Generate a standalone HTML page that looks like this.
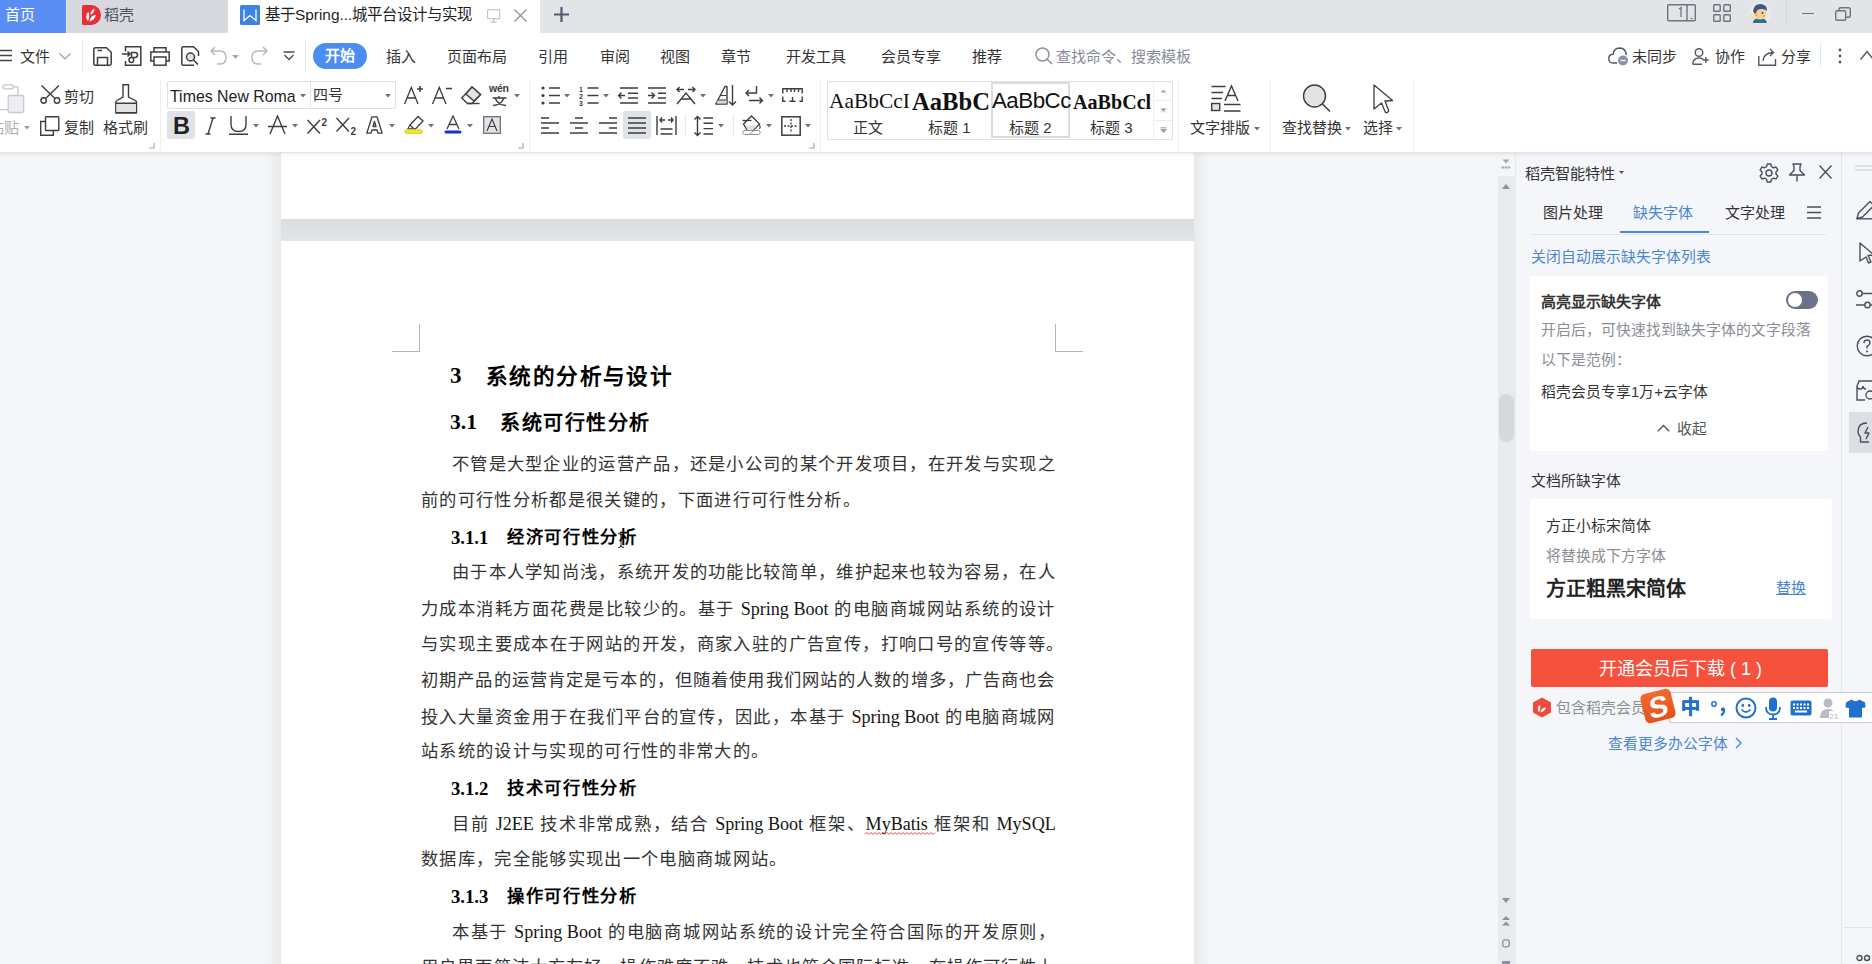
<!DOCTYPE html>
<html lang="zh-CN"><head><meta charset="utf-8">
<style>
*{margin:0;padding:0;box-sizing:border-box}
html,body{width:1872px;height:964px;overflow:hidden;background:#f5f6f8;font-family:"Liberation Sans",sans-serif;color:#333}
.a{position:absolute;white-space:nowrap}
svg{position:absolute;overflow:visible}
#tabs{position:absolute;left:0;top:0;width:1872px;height:33px;background:#e3e4e8}
#menu{position:absolute;left:0;top:33px;width:1872px;height:45px;background:#fff}
#ribbon{position:absolute;left:0;top:78px;width:1872px;height:75px;background:#fff}
#doc{position:absolute;left:0;top:153px;width:1497px;height:811px;background:#f5f6f8;overflow:hidden}
.pg{position:absolute;left:281px;width:913px;background:#fff}
.menu{font-size:15px;color:#333;top:47px;line-height:20px}
.L{position:absolute;font-family:"Liberation Serif",serif;color:#333;font-size:17.3px;line-height:24px;height:24px;white-space:nowrap}
.E{font-size:18.1px;letter-spacing:0;color:#151515}
.H{position:absolute;font-family:"Liberation Serif",serif;color:#000;font-weight:bold;white-space:nowrap}
</style></head><body>
<!-- TABS -->
<div id="tabs">
  <div class="a" style="left:0;top:0;width:66px;height:33px;background:#5b8ef4"></div>
  <div class="a" style="left:5px;top:5px;font-size:15px;line-height:20px;color:#fff">首页</div>
  <div class="a" style="left:67px;top:0;width:161px;height:33px;background:#d8d9de;border-radius:0 0 4px 0"></div>
  <svg style="left:82px;top:5px" width="20" height="20" viewBox="0 0 20 20"><path d="M0 1.5Q0 0 1.5 0H9.5A9.5 10 0 0 1 9.5 20H1.5Q0 20 0 18.5Z" fill="#e72f38"/><path d="M6 16C3 13 4 9 6.5 7C7.5 10 7.5 13 6 16Z" fill="#fff"/><path d="M7.5 16.5C8 12.5 10.5 10 14 10C13 13.5 11 15.5 7.5 16.5Z" fill="#fff"/><path d="M8.5 10C8.5 7 10 4.5 12.5 3.5C12.5 6.5 11 8.5 8.5 10Z" fill="#fff"/></svg>
  <div class="a" style="left:104px;top:5px;font-size:15px;line-height:20px;color:#4a505e">稻壳</div>
  <div class="a" style="left:228px;top:0;width:312px;height:33px;background:#fff"></div>
  <svg style="left:240px;top:5px" width="20" height="20" viewBox="0 0 20 20"><rect x="0" y="0" width="20" height="20" rx="1.5" fill="#3b84e2"/><path d="M4 4.5V15.5L10 10.5L16 15.5V4.5" fill="none" stroke="#fff" stroke-width="1.3"/></svg>
  <div class="a" style="left:265px;top:5px;font-size:15.4px;line-height:20px;color:#1e1e1e">基于Spring...城平台设计与实现</div>
  <svg style="left:487px;top:9px" width="14" height="14" viewBox="0 0 14 14"><rect x="0.6" y="0.6" width="12" height="9" rx="0.5" fill="none" stroke="#c4c7cf" stroke-width="1.2"/><path d="M6.6 10V13M3.5 13.2H9.7" stroke="#c4c7cf" stroke-width="1.2"/></svg>
  <svg style="left:514px;top:9px" width="13" height="13" viewBox="0 0 13 13"><path d="M0.5 0.5L12.5 12.5M12.5 0.5L0.5 12.5" stroke="#8d919d" stroke-width="1.3"/></svg>
  <svg style="left:554px;top:7px" width="15" height="15" viewBox="0 0 15 15"><path d="M7.5 0V15M0 7.5H15" stroke="#535a6c" stroke-width="2.2"/></svg>
  <!-- right side -->
  <svg style="left:1667px;top:4px" width="30" height="18" viewBox="0 0 30 18"><rect x="0.7" y="0.7" width="27.6" height="16" rx="1" fill="none" stroke="#6e7380" stroke-width="1.4"/><path d="M20 1V17" stroke="#6e7380" stroke-width="1.4"/><path d="M12 5L14 3.5V13" fill="none" stroke="#6e7380" stroke-width="1.3"/><path d="M23.5 14.5H25.5" stroke="#6e7380" stroke-width="1.2"/></svg>
  <svg style="left:1713px;top:4px" width="18" height="18" viewBox="0 0 18 18"><g fill="none" stroke="#6e7380" stroke-width="1.4"><rect x="0.7" y="0.7" width="6.5" height="6.5" rx="0.8"/><rect x="10.8" y="0.7" width="6.5" height="6.5" rx="0.8"/><rect x="0.7" y="10.8" width="6.5" height="6.5" rx="0.8"/><rect x="10.8" y="10.8" width="6.5" height="6.5" rx="0.8"/></g></svg>
  <svg style="left:1746px;top:0px" width="28" height="25" viewBox="0 0 28 25"><circle cx="14" cy="13" r="11.5" fill="#e8e9ee"/><path d="M7 22Q8 18 14 18Q20 18 21 23H7Z" fill="#2f6f8a"/><path d="M8 12Q8 7.5 13.5 7.5Q20 7.5 20.5 12.5Q20.5 19 14.5 19.5Q8.5 19.5 8 14Z" fill="#f3cf9b"/><path d="M7.5 12Q7 4 14.5 4Q21.5 4.5 21 11Q19 8.5 14 9Q11 9.5 10 12Z" fill="#3b5b86"/><path d="M7.5 11Q7.5 9 9.5 8.5L10.5 12.5L8.5 14Z" fill="#6b4a2e"/><circle cx="16.5" cy="12.8" r="0.9" fill="#333"/><circle cx="10.5" cy="15" r="1" fill="#e8866a" opacity="0.7"/><circle cx="18" cy="16" r="1" fill="#e8866a" opacity="0.7"/><path d="M4 16Q3.5 13.5 5.5 14L8 17.5L7.5 21Q5 20 4 16Z" fill="#f2dfa8"/></svg>
  <div class="a" style="left:1786px;top:0;width:1px;height:25px;background:#d5d6da"></div>
  <div class="a" style="left:1802px;top:13px;width:12px;height:1.4px;background:#6e7380"></div>
  <svg style="left:1835px;top:7px" width="16" height="14" viewBox="0 0 16 14"><g fill="none" stroke="#6e7380" stroke-width="1.4"><rect x="0.7" y="3.7" width="10" height="9.6" rx="1.5"/><path d="M4 3.5V2.2Q4 0.7 5.5 0.7H13.5Q15.3 0.7 15.3 2.5V8.5Q15.3 10.3 13.5 10.3H11"/></g></svg>
</div>
<!-- MENU ROW -->
<div id="menu">
  <svg style="left:0px;top:16px" width="13" height="13" viewBox="0 0 13 13"><path d="M0 1.5H12M0 6.5H12M0 11.5H12" stroke="#444" stroke-width="1.3"/></svg>
  <div class="a" style="left:20px;top:14px;font-size:15px;line-height:20px;color:#333">文件</div>
  <svg style="left:59px;top:20px" width="12" height="7" viewBox="0 0 12 7"><path d="M0.5 0.5L6 6L11.5 0.5" fill="none" stroke="#9a9ea8" stroke-width="1.2"/></svg>
  <div class="a" style="left:82px;top:8px;width:1px;height:30px;background:#e8e9ec"></div>
  <!-- save -->
  <svg style="left:93px;top:14px" width="19" height="19" viewBox="0 0 19 19"><g fill="none" stroke="#3d3d3d" stroke-width="1.5" stroke-linejoin="round"><path d="M2.5 0.8H13.5L18.2 5.2V16.5Q18.2 18.2 16.5 18.2H2.5Q0.8 18.2 0.8 16.5V2.5Q0.8 0.8 2.5 0.8Z"/><path d="M4.5 3.5H9"/><path d="M4.5 18.2V10.5H14.5V18.2"/></g></svg>
  <!-- export -->
  <svg style="left:122px;top:13px" width="20" height="20" viewBox="0 0 20 20"><g fill="none" stroke="#3d3d3d" stroke-width="1.5"><path d="M3.5 5.5V0.8H18.8V19.2H3.5V15"/><path d="M0 8H8M5.5 5.5L8 8L5.5 10.5"/><path d="M9.5 12V6.5H13Q15.5 6.5 15.5 9Q15.5 11.5 13 11.5H9.5Q7 11.5 7 14Q7 16.5 9.5 16.5Q11.5 16.5 11.5 14.5V11.5"/></g></svg>
  <!-- print -->
  <svg style="left:150px;top:14px" width="20" height="19" viewBox="0 0 20 19"><g fill="none" stroke="#3d3d3d" stroke-width="1.5"><path d="M4 5V0.8H16V5"/><path d="M4 14H0.8V5H19.2V14H16"/><rect x="4" y="10" width="12" height="8.2"/></g></svg>
  <!-- preview -->
  <svg style="left:181px;top:13px" width="20" height="20" viewBox="0 0 20 20"><g fill="none" stroke="#3d3d3d" stroke-width="1.5" stroke-linejoin="round"><path d="M13 19.2H2.5Q0.8 19.2 0.8 17.5V2.5Q0.8 0.8 2.5 0.8H12.5L17.5 5.5V10"/></g><circle cx="9.5" cy="11" r="4" fill="#e1e3e7" stroke="#3d3d3d" stroke-width="1.5"/><path d="M12.5 14L17 18.5" stroke="#3d3d3d" stroke-width="1.6"/></svg>
  <!-- undo -->
  <svg style="left:210px;top:13px" width="18" height="19" viewBox="0 0 18 19"><path d="M5 1L1 5L5 9M1 5H10Q16 5 16 11.5Q16 18 10 18H7" fill="none" stroke="#b5b8c0" stroke-width="1.5"/></svg>
  <svg style="left:232px;top:22px" width="7" height="4" viewBox="0 0 7 4"><path d="M0 0H7L3.5 4Z" fill="#a5a8b0"/></svg>
  <!-- redo -->
  <svg style="left:250px;top:13px" width="18" height="19" viewBox="0 0 18 19"><path d="M13 1L17 5L13 9M17 5H8Q2 5 2 11.5Q2 18 8 18H11" fill="none" stroke="#b5b8c0" stroke-width="1.5"/></svg>
  <!-- customize -->
  <svg style="left:283px;top:18px" width="12" height="10" viewBox="0 0 12 10"><path d="M0.5 1H11.5M1.5 4L6 8.5L10.5 4" fill="none" stroke="#4a4a4a" stroke-width="1.3"/></svg>
  <div class="a" style="left:305px;top:8px;width:1px;height:30px;background:#e8e9ec"></div>
  <div class="a" style="left:313px;top:10px;width:54px;height:26px;background:#4b8df0;border-radius:13px"></div>
  <div class="a" style="left:325px;top:13px;font-size:15px;line-height:20px;color:#fff;font-weight:bold">开始</div>
</div>
<div class="a menu" style="left:386px">插入</div>
<div class="a menu" style="left:447px">页面布局</div>
<div class="a menu" style="left:538px">引用</div>
<div class="a menu" style="left:600px">审阅</div>
<div class="a menu" style="left:660px">视图</div>
<div class="a menu" style="left:721px">章节</div>
<div class="a menu" style="left:786px">开发工具</div>
<div class="a menu" style="left:881px">会员专享</div>
<div class="a menu" style="left:972px">推荐</div>
<svg style="left:1035px;top:47px" width="18" height="18" viewBox="0 0 18 18"><circle cx="7.5" cy="7.5" r="6.5" fill="none" stroke="#8e939e" stroke-width="1.5"/><path d="M12.2 12.2L17 17" stroke="#8e939e" stroke-width="1.6"/></svg>
<div class="a menu" style="left:1056px;color:#878c97">查找命令、搜索模板</div>
<!-- right of menu -->
<svg style="left:1608px;top:47px" width="21" height="19" viewBox="0 0 21 19"><path d="M9 16H5Q0.8 16 0.8 11.5Q0.8 7.5 5 7.3Q6 1 11.5 1Q18 1.3 18.3 8" fill="none" stroke="#50576a" stroke-width="1.4"/><circle cx="15" cy="13.5" r="5" fill="#8a92a6"/><path d="M12.5 13.5H17.5" stroke="#fff" stroke-width="1.4"/></svg>
<div class="a menu" style="left:1632px;color:#333">未同步</div>
<svg style="left:1692px;top:48px" width="18" height="17" viewBox="0 0 18 17"><g fill="none" stroke="#50576a" stroke-width="1.4"><circle cx="7" cy="4.5" r="3.8"/><path d="M0.8 16.2Q0.8 10 7 10Q10 10 11.5 11.5M0.8 16.2H10"/><path d="M13.8 9V15M10.8 12H16.8"/></g></svg>
<div class="a menu" style="left:1715px;color:#333">协作</div>
<svg style="left:1758px;top:48px" width="19" height="18" viewBox="0 0 19 18"><g fill="none" stroke="#50576a" stroke-width="1.4"><path d="M0.8 8V17.2H17.5V11"/><path d="M5 13Q5.5 5 15 4.5M12 1L15.5 4.5L12 8"/></g></svg>
<div class="a menu" style="left:1781px;color:#333">分享</div>
<div class="a" style="left:1820px;top:43px;width:1px;height:24px;background:#e3e4e8"></div>
<svg style="left:1838px;top:48px" width="4" height="16" viewBox="0 0 4 16"><circle cx="2" cy="2" r="1.4" fill="#555"/><circle cx="2" cy="8" r="1.4" fill="#555"/><circle cx="2" cy="14" r="1.4" fill="#555"/></svg>
<svg style="left:1860px;top:50px" width="14" height="10" viewBox="0 0 14 10"><path d="M0.5 9.5L7 1.5L13.5 9.5" fill="none" stroke="#555" stroke-width="1.3"/></svg>

<div id="ribbon"></div>
<!-- RIBBON -->
<!-- RIBBON ICONS -->
<div class="a" style="left:0;top:152px;width:1872px;height:1px;background:#e4e5e8"></div>
<!-- section 1 clipboard -->
<svg style="left:0px;top:84px" width="25" height="30" viewBox="0 0 25 30"><g fill="none" stroke="#c3c6cc" stroke-width="1.3"><rect x="3" y="0.8" width="10.5" height="4" rx="2"/><path d="M13.5 2.8H18V11.5"/><path d="M0 25.6H8"/></g><rect x="8.2" y="11.5" width="15.5" height="17" rx="1.5" fill="#eceef1" stroke="#c6c9cf" stroke-width="1.3"/></svg>
<div class="a" style="left:-11px;top:118px;font-size:15px;line-height:20px;color:#a9acb4">粘贴</div>
<svg style="left:24px;top:126px" width="6" height="4" viewBox="0 0 6 4"><path d="M0 0H6L3 3.5Z" fill="#9a9da5"/></svg>
<svg style="left:40px;top:85px" width="21" height="19" viewBox="0 0 21 19"><g fill="none" stroke="#3d3d3d" stroke-width="1.4"><path d="M1.5 0.5L14.5 13M19 0.5L6 13"/><circle cx="3.6" cy="15.5" r="2.7"/><circle cx="17" cy="15.5" r="2.7"/></g></svg>
<div class="a" style="left:64px;top:87px;font-size:15px;line-height:20px;color:#333">剪切</div>
<svg style="left:40px;top:116px" width="20" height="20" viewBox="0 0 20 20"><g fill="none" stroke="#3d3d3d" stroke-width="1.4"><rect x="5.5" y="0.7" width="13.3" height="13.8" rx="0.8"/><path d="M5.5 5.5H0.7V19.3H13.3V14.5"/></g></svg>
<div class="a" style="left:64px;top:118px;font-size:15px;line-height:20px;color:#333">复制</div>
<svg style="left:115px;top:84px" width="23" height="30" viewBox="0 0 23 30"><path d="M8 0.8H13.5V13L20.3 16.5Q21.5 17.2 21.5 18.5V28.7H0.8V18.5Q0.8 17.2 2 16.5L8 13Z" fill="#fff" stroke="#3d3d3d" stroke-width="1.4"/><rect x="1.5" y="19.5" width="19.5" height="8.5" fill="#e1e3e7"/><path d="M0.8 19.3H21.5M0.8 28.7H21.5" stroke="#3d3d3d" stroke-width="1.4"/></svg>
<div class="a" style="left:103px;top:118px;font-size:15px;line-height:20px;color:#333">格式刷</div>
<svg style="left:149px;top:143px" width="6" height="6" viewBox="0 0 6 6"><path d="M5 0V5H0" fill="none" stroke="#a0a3aa" stroke-width="1.2"/></svg>
<div class="a" style="left:160px;top:80px;width:1px;height:71px;background:#eeeff1"></div>
<!-- section 2 font -->
<div class="a" style="left:167px;top:81px;width:229px;height:28px;border:1px solid #dfe0e4;border-radius:2px"></div>
<div class="a" style="left:310px;top:82px;width:1px;height:26px;background:#e4e5e8"></div>
<div class="a" style="left:170px;top:87px;font-size:15.9px;line-height:20px;color:#222">Times New Roma</div>
<svg style="left:300px;top:94px" width="6" height="4" viewBox="0 0 6 4"><path d="M0 0H6L3 3.5Z" fill="#6d7280"/></svg>
<div class="a" style="left:313px;top:85px;font-size:15px;line-height:20px;color:#333">四号</div>
<svg style="left:385px;top:94px" width="6" height="4" viewBox="0 0 6 4"><path d="M0 0H6L3 3.5Z" fill="#6d7280"/></svg>
<svg style="left:404px;top:86px" width="20" height="19" viewBox="0 0 20 19"><g fill="none" stroke="#3d3d3d" stroke-width="1.3"><path d="M0.5 18L7.3 1.5L14 18M3 12H11.5"/><path d="M16 0V6M13 3H19" stroke-width="1.5"/></g></svg>
<svg style="left:432px;top:86px" width="21" height="19" viewBox="0 0 21 19"><g fill="none" stroke="#3d3d3d" stroke-width="1.3"><path d="M0.5 18L7.3 1.5L14 18M3 12H11.5"/><path d="M14 2.5H20" stroke-width="1.5"/></g></svg>
<svg style="left:461px;top:86px" width="21" height="19" viewBox="0 0 21 19"><path d="M11 1L19.5 8.5L11 17.5H6.5L0.8 12Z" fill="#fff" stroke="#3d3d3d" stroke-width="1.4"/><path d="M11 1L19.5 8.5L13 15L4.8 8Z" fill="#e1e3e7" stroke="#3d3d3d" stroke-width="1.4"/><path d="M6.5 17.5H18.5" stroke="#3d3d3d" stroke-width="1.4"/></svg>
<div class="a" style="left:489px;top:82px;font-size:10.5px;line-height:12px;font-weight:bold;color:#3d3d3d;letter-spacing:-0.2px">wén</div>
<svg style="left:492px;top:96px" width="15" height="10" viewBox="0 0 15 10"><g fill="none" stroke="#3d3d3d" stroke-width="1.4"><path d="M7 0V1.5M0.5 2H14.5M3 2Q6 9 14 9.5M12 2Q9 9 1 9.5"/></g></svg>
<svg style="left:514px;top:94px" width="6" height="4" viewBox="0 0 6 4"><path d="M0 0H6L3 3.5Z" fill="#6d7280"/></svg>
<!-- row 2 -->
<div class="a" style="left:167px;top:111px;width:28px;height:28px;background:#dfe2e7;border-radius:2px"></div>
<div class="a" style="left:173px;top:113px;font-size:23.5px;line-height:26px;font-weight:bold;color:#222">B</div>
<svg style="left:204px;top:117px" width="12" height="18" viewBox="0 0 12 18"><path d="M4 17L9 1M6.5 1H11.5M1.5 17H6.5" fill="none" stroke="#3d3d3d" stroke-width="1.4"/></svg>
<svg style="left:229px;top:116px" width="19" height="19" viewBox="0 0 19 19"><path d="M2 0V8.5Q2 15.5 9.5 15.5Q17 15.5 17 8.5V0M0 18.3H19" fill="none" stroke="#3d3d3d" stroke-width="1.4"/></svg>
<svg style="left:253px;top:124px" width="6" height="4" viewBox="0 0 6 4"><path d="M0 0H6L3 3.5Z" fill="#6d7280"/></svg>
<svg style="left:268px;top:115px" width="19" height="20" viewBox="0 0 19 20"><path d="M2 19L9.5 1L17 19M0 11.5H19" fill="none" stroke="#3d3d3d" stroke-width="1.4"/></svg>
<svg style="left:292px;top:124px" width="6" height="4" viewBox="0 0 6 4"><path d="M0 0H6L3 3.5Z" fill="#6d7280"/></svg>
<svg style="left:307px;top:117px" width="21" height="18" viewBox="0 0 21 18"><path d="M0.5 3L13 16.5M13 3L0.5 16.5" stroke="#3d3d3d" stroke-width="1.4"/><text x="14.5" y="9" font-size="10" font-weight="bold" font-family="Liberation Sans" fill="#3d3d3d">2</text></svg>
<svg style="left:336px;top:117px" width="21" height="18" viewBox="0 0 21 18"><path d="M0.5 1L13 14.5M13 1L0.5 14.5" stroke="#3d3d3d" stroke-width="1.4"/><text x="14.5" y="17.5" font-size="10" font-weight="bold" font-family="Liberation Sans" fill="#3d3d3d">2</text></svg>
<svg style="left:366px;top:116px" width="17" height="18" viewBox="0 0 17 18"><path d="M0.8 17.2L6 0.8H11L16.2 17.2H12L11 14H6L5 17.2Z M7 10.5H10L8.5 5.5Z" fill="#fff" stroke="#3d3d3d" stroke-width="1.3" stroke-linejoin="round"/></svg>
<svg style="left:389px;top:124px" width="6" height="4" viewBox="0 0 6 4"><path d="M0 0H6L3 3.5Z" fill="#6d7280"/></svg>
<svg style="left:404px;top:115px" width="21" height="19" viewBox="0 0 21 19"><path d="M9 13L6 10L14 1.5L19 6L11 14.5Z" fill="#fff" stroke="#3d3d3d" stroke-width="1.3"/><path d="M6 10L4 13.5L6 14L9 13" fill="none" stroke="#3d3d3d" stroke-width="1.2"/><rect x="0.8" y="14.8" width="17.5" height="3.6" rx="1.8" fill="#f5e61e" stroke="#c9bd3a" stroke-width="0.8"/></svg>
<svg style="left:428px;top:124px" width="6" height="4" viewBox="0 0 6 4"><path d="M0 0H6L3 3.5Z" fill="#6d7280"/></svg>
<svg style="left:444px;top:115px" width="18" height="19" viewBox="0 0 18 19"><path d="M3 14L9 1L15 14M5 9.5H13" fill="none" stroke="#3d3d3d" stroke-width="1.3"/><rect x="0.5" y="15.5" width="17" height="3" rx="1.5" fill="#1530d8"/></svg>
<svg style="left:467px;top:124px" width="6" height="4" viewBox="0 0 6 4"><path d="M0 0H6L3 3.5Z" fill="#6d7280"/></svg>
<svg style="left:483px;top:116px" width="18" height="18" viewBox="0 0 18 18"><rect x="0.7" y="0.7" width="16.6" height="16.6" fill="#e1e3e7" stroke="#6b6f7a" stroke-width="1.3"/><path d="M4 15L9 3L14 15M5.8 10.5H12.2" fill="none" stroke="#3d3d3d" stroke-width="1.2"/></svg>
<svg style="left:518px;top:143px" width="6" height="6" viewBox="0 0 6 6"><path d="M5 0V5H0" fill="none" stroke="#a0a3aa" stroke-width="1.2"/></svg>
<div class="a" style="left:529px;top:80px;width:1px;height:71px;background:#eeeff1"></div>
<!-- section 3 paragraph -->
<svg style="left:541px;top:86px" width="20" height="19" viewBox="0 0 20 19"><g fill="#3d3d3d"><circle cx="2" cy="2" r="1.6"/><circle cx="2" cy="9.5" r="1.6"/><circle cx="2" cy="17" r="1.6"/></g><path d="M8 2H19M8 9.5H19M8 17H19" stroke="#3d3d3d" stroke-width="1.4"/></svg>
<svg style="left:564px;top:94px" width="6" height="4" viewBox="0 0 6 4"><path d="M0 0H6L3 3.5Z" fill="#6d7280"/></svg>
<svg style="left:579px;top:85px" width="21" height="20" viewBox="0 0 21 20"><g font-family="Liberation Sans" font-size="7" font-weight="bold" fill="#3d3d3d"><text x="0" y="6.5">1</text><text x="0" y="14">2</text><text x="0" y="21">3</text></g><path d="M8.5 3H19.5M8.5 10.5H19.5M8.5 18H19.5" stroke="#3d3d3d" stroke-width="1.4"/></svg>
<svg style="left:603px;top:94px" width="6" height="4" viewBox="0 0 6 4"><path d="M0 0H6L3 3.5Z" fill="#6d7280"/></svg>
<svg style="left:618px;top:86px" width="21" height="19" viewBox="0 0 21 19"><g fill="none" stroke="#3d3d3d" stroke-width="1.4"><path d="M2 2H20M10 7.3H20M10 12H20M2 17H20"/><path d="M0.5 9.5H7M3.5 6.5L0.5 9.5L3.5 12.5"/></g></svg>
<svg style="left:647px;top:86px" width="21" height="19" viewBox="0 0 21 19"><g fill="none" stroke="#3d3d3d" stroke-width="1.4"><path d="M1 2H19M11 7.3H19M11 12H19M1 17H19"/><path d="M1 9.5H7.5M4.5 6.5L7.5 9.5L4.5 12.5"/></g></svg>
<svg style="left:676px;top:86px" width="21" height="19" viewBox="0 0 21 19"><g fill="none" stroke="#3d3d3d" stroke-width="1.4"><path d="M1 18L10 7L19 18M5 13H15"/><path d="M1 3.5H8M3.5 1L1 3.5L3.5 6M12 3.5H19M16.5 1L19 3.5L16.5 6"/></g></svg>
<svg style="left:700px;top:94px" width="6" height="4" viewBox="0 0 6 4"><path d="M0 0H6L3 3.5Z" fill="#6d7280"/></svg>
<svg style="left:715px;top:85px" width="21" height="21" viewBox="0 0 21 21"><path d="M0.8 19L10 1.5H12V19Z" fill="#fff" stroke="#3d3d3d" stroke-width="1.4" stroke-linejoin="round"/><path d="M3 15H11.5V18.5H1.5Z" fill="#d5d8dd"/><path d="M5.5 10.5H11.5M2.8 15H11.5" stroke="#3d3d3d" stroke-width="1.2"/><path d="M17.5 0V20M14 16.5L17.5 20L21 16.5" fill="none" stroke="#3d3d3d" stroke-width="1.4"/></svg>
<svg style="left:745px;top:86px" width="19" height="19" viewBox="0 0 19 19"><g fill="none" stroke="#3d3d3d" stroke-width="1.4"><path d="M11.5 0V7H1M4 4L1 7L4 10"/><path d="M4 14.5H17.5M14.5 11.5L17.5 14.5L14.5 17.5"/></g></svg>
<svg style="left:768px;top:94px" width="6" height="4" viewBox="0 0 6 4"><path d="M0 0H6L3 3.5Z" fill="#6d7280"/></svg>
<svg style="left:782px;top:88px" width="21" height="14" viewBox="0 0 21 14"><g fill="none" stroke="#3d3d3d" stroke-width="1.4"><path d="M0.8 5.5V0.8H20.2V5.5"/><path d="M5 0.8V4M9 0.8V4M12.5 0.8V4M16.5 0.8V4"/><path d="M0.8 8.5V13.2H3.5M17.5 13.2H20.2V8.5M7.5 13.2H13.5M10.5 9V13.2"/></g></svg>
<svg style="left:541px;top:117px" width="18" height="17" viewBox="0 0 18 17"><path d="M0 1H8M0 6H18M0 11H8M0 16H18" stroke="#3d3d3d" stroke-width="1.4"/></svg>
<svg style="left:570px;top:117px" width="18" height="17" viewBox="0 0 18 17"><path d="M5 1H13M0 6H18M5 11H13M0 16H18" stroke="#3d3d3d" stroke-width="1.4"/></svg>
<svg style="left:599px;top:117px" width="18" height="17" viewBox="0 0 18 17"><path d="M10 1H18M0 6H18M10 11H18M0 16H18" stroke="#3d3d3d" stroke-width="1.4"/></svg>
<div class="a" style="left:623px;top:111px;width:28px;height:28px;background:#dfe2e7;border-radius:2px"></div>
<svg style="left:628px;top:117px" width="18" height="17" viewBox="0 0 18 17"><path d="M0 1H18M0 6H18M0 11H18M0 16H18" stroke="#3d3d3d" stroke-width="1.5"/></svg>
<svg style="left:656px;top:116px" width="21" height="20" viewBox="0 0 21 20"><g fill="none" stroke="#3d3d3d" stroke-width="1.4"><path d="M1 0V19M20 0V19M4.5 13H16.5M4.5 18H16.5"/><path d="M4 4H9M6 1.5L4 4L6 6.5M12 4H17M15 1.5L17 4L15 6.5"/></g></svg>
<div class="a" style="left:685px;top:114px;width:1px;height:23px;background:#e8e9ec"></div>
<svg style="left:694px;top:116px" width="20" height="20" viewBox="0 0 20 20"><g fill="none" stroke="#3d3d3d" stroke-width="1.4"><path d="M3.5 0.5V19.5M0.5 3.5L3.5 0.5L6.5 3.5M0.5 16.5L3.5 19.5L6.5 16.5"/><path d="M9.5 2H19M9.5 7.3H19M9.5 12.6H19M9.5 18H19"/></g></svg>
<svg style="left:718px;top:124px" width="6" height="4" viewBox="0 0 6 4"><path d="M0 0H6L3 3.5Z" fill="#6d7280"/></svg>
<div class="a" style="left:733px;top:114px;width:1px;height:23px;background:#e8e9ec"></div>
<svg style="left:742px;top:115px" width="20" height="20" viewBox="0 0 20 20"><path d="M1.5 9L9.5 1L17.5 9L11 15.5H5.5Z" fill="#fff" stroke="#3d3d3d" stroke-width="1.3"/><path d="M3.5 10.5H15.5L11 15H5.5Z" fill="#dcdfe3"/><path d="M0.5 5.5H9.5" stroke="#3d3d3d" stroke-width="1.3"/><path d="M17.5 10Q19 12 17.5 14" fill="none" stroke="#3d3d3d" stroke-width="1.2"/><rect x="0.7" y="15.5" width="17.5" height="4" rx="2" fill="#fff" stroke="#8d919b" stroke-width="1"/><path d="M7 19.5L12 15.5" stroke="#e05d6a" stroke-width="0.9"/></svg>
<svg style="left:766px;top:124px" width="6" height="4" viewBox="0 0 6 4"><path d="M0 0H6L3 3.5Z" fill="#6d7280"/></svg>
<svg style="left:781px;top:116px" width="20" height="20" viewBox="0 0 20 20"><rect x="0.8" y="0.8" width="18.4" height="18.4" fill="none" stroke="#3d3d3d" stroke-width="1.5"/><path d="M10 3V17M3 10H17" stroke="#3d3d3d" stroke-width="1.3" stroke-dasharray="2 1.5"/></svg>
<svg style="left:805px;top:124px" width="6" height="4" viewBox="0 0 6 4"><path d="M0 0H6L3 3.5Z" fill="#6d7280"/></svg>
<svg style="left:809px;top:143px" width="6" height="6" viewBox="0 0 6 6"><path d="M5 0V5H0" fill="none" stroke="#a0a3aa" stroke-width="1.2"/></svg>
<div class="a" style="left:820px;top:80px;width:1px;height:71px;background:#eeeff1"></div>
<!-- section 4 styles -->
<div class="a" style="left:827px;top:81px;width:346px;height:59px;border:1px solid #e1e2e5"></div>
<div class="a" style="left:991px;top:82px;width:79px;height:56px;border:2px solid #dcdde0;background:#fff"></div>
<div class="a" style="left:829px;top:88px;font-family:'Liberation Serif',serif;font-size:21.4px;line-height:26px;color:#111">AaBbCcI</div>
<div class="a" style="left:912px;top:88px;font-family:'Liberation Serif',serif;font-size:24.6px;line-height:28px;font-weight:bold;color:#111">AaBbC</div>
<div class="a" style="left:992px;top:88px;font-size:22.3px;line-height:26px;color:#111;letter-spacing:-0.5px">AaBbCc</div>
<div class="a" style="left:1073px;top:90px;font-family:'Liberation Serif',serif;font-size:20.1px;line-height:24px;font-weight:bold;color:#111">AaBbCcl</div>
<div class="a" style="left:853px;top:118px;font-size:15px;line-height:20px;color:#333">正文</div>
<div class="a" style="left:928px;top:118px;font-size:15px;line-height:20px;color:#333">标题 1</div>
<div class="a" style="left:1009px;top:118px;font-size:15px;line-height:20px;color:#333">标题 2</div>
<div class="a" style="left:1090px;top:118px;font-size:15px;line-height:20px;color:#333">标题 3</div>
<div class="a" style="left:1153px;top:82px;width:1px;height:57px;background:#eceef0"></div>
<div class="a" style="left:1154px;top:100px;width:18px;height:1px;background:#eceef0"></div>
<div class="a" style="left:1154px;top:120px;width:18px;height:1px;background:#eceef0"></div>
<svg style="left:1160px;top:89px" width="7" height="4" viewBox="0 0 7 4"><path d="M0.5 3.5H6.5L3.5 0.5Z" fill="#a8abb3"/></svg>
<svg style="left:1160px;top:108px" width="7" height="4" viewBox="0 0 7 4"><path d="M0.5 0.5H6.5L3.5 3.5Z" fill="#8d919b"/><path d="M0.5 3.8H6.5" stroke="#b5b8bf" stroke-width="0.5"/></svg>
<svg style="left:1160px;top:127px" width="7" height="6" viewBox="0 0 7 6"><path d="M0.5 0.8H6.5M0.5 2.6H6.5" stroke="#8d919b" stroke-width="0.9"/><path d="M0.5 3.3H6.5L3.5 5.8Z" fill="#8d919b"/></svg>
<div class="a" style="left:1178px;top:80px;width:1px;height:71px;background:#eeeff1"></div>
<!-- section 5 -->
<svg style="left:1211px;top:85px" width="30" height="28" viewBox="0 0 30 28"><g fill="none" stroke="#3d3d3d" stroke-width="1.4"><path d="M0.5 1.5H14.5M0.5 7.5H12M0.5 13.5H11"/><path d="M14 16L20.5 1L27 16M16 10.5H25"/><rect x="0.7" y="18.5" width="8" height="7" fill="#e1e3e7"/><path d="M13 19.5H29.5M13 26H29.5"/></g></svg>
<div class="a" style="left:1190px;top:118px;font-size:15px;line-height:20px;color:#333">文字排版</div>
<svg style="left:1254px;top:127px" width="6" height="4" viewBox="0 0 6 4"><path d="M0 0H6L3 3.5Z" fill="#6d7280"/></svg>
<div class="a" style="left:1270px;top:80px;width:1px;height:71px;background:#eeeff1"></div>
<svg style="left:1302px;top:84px" width="30" height="30" viewBox="0 0 30 30"><circle cx="12.5" cy="12" r="11" fill="#e1e3e7" stroke="#3d3d3d" stroke-width="1.4"/><path d="M20.5 20L28 27.5" stroke="#3d3d3d" stroke-width="1.5"/></svg>
<div class="a" style="left:1282px;top:118px;font-size:15px;line-height:20px;color:#333">查找替换</div>
<svg style="left:1345px;top:127px" width="6" height="4" viewBox="0 0 6 4"><path d="M0 0H6L3 3.5Z" fill="#6d7280"/></svg>
<svg style="left:1373px;top:84px" width="21" height="30" viewBox="0 0 21 30"><path d="M1 1L19.5 16.5L12 17L15.5 26Q16 28 14 28.5Q12.5 29 12 27.5L8.5 19L1 25Z" fill="#fff" stroke="#3d3d3d" stroke-width="1.3" stroke-linejoin="round"/></svg>
<div class="a" style="left:1363px;top:118px;font-size:15px;line-height:20px;color:#333">选择</div>
<svg style="left:1396px;top:127px" width="6" height="4" viewBox="0 0 6 4"><path d="M0 0H6L3 3.5Z" fill="#6d7280"/></svg>
<div class="a" style="left:1413px;top:80px;width:1px;height:71px;background:#eeeff1"></div>

<!-- DOC -->
<div id="doc">
  <div class="a" style="left:265px;top:0;width:16px;height:811px;background:linear-gradient(to right,rgba(0,0,0,0),rgba(0,0,0,0.05))"></div>
  <div class="a" style="left:1194px;top:0;width:16px;height:811px;background:linear-gradient(to left,rgba(0,0,0,0),rgba(0,0,0,0.05))"></div>
  <div class="pg" style="top:0;height:66px"></div>
  <div class="a" style="left:281px;top:66px;width:913px;height:22px;background:linear-gradient(#dcdde0,#e3e4e7)"></div>
  <div class="pg" style="top:88px;height:900px"></div>
</div>
<!-- PANEL -->
<div class="a" style="left:1497px;top:153px;width:19px;height:811px;background:#f5f6f8"></div>
<div class="a" style="left:1498px;top:176px;width:17px;height:788px;background:#e9eaee"></div>
<div class="a" style="left:1515px;top:153px;width:1px;height:811px;background:#e8e9ec"></div>
<svg style="left:1501px;top:159px" width="10" height="11" viewBox="0 0 10 11"><path d="M1.5 0.5H8.5L5 4.5Z" fill="#a4a8b1"/><path d="M0.5 8.5H9.5" stroke="#a4a8b1" stroke-width="2" stroke-dasharray="2.5 0.6"/></svg>
<svg style="left:1502px;top:184px" width="8" height="5" viewBox="0 0 8 5"><path d="M0 5H8L4 0Z" fill="#8d919b"/></svg>
<div class="a" style="left:1499px;top:394px;width:15px;height:48px;background:#d6d8dd;border-radius:7px"></div>
<svg style="left:1502px;top:898px" width="8" height="5" viewBox="0 0 8 5"><path d="M0 0H8L4 5Z" fill="#8d919b"/></svg>
<svg style="left:1502px;top:916px" width="8" height="10" viewBox="0 0 8 10"><path d="M0 4H8L4 0Z M0 9.5H8L4 5.5Z" fill="#8d919b"/></svg>
<svg style="left:1502px;top:939px" width="8" height="9" viewBox="0 0 8 9"><rect x="0.8" y="0.8" width="6.4" height="7" rx="2" fill="none" stroke="#8d919b" stroke-width="1.3"/></svg>
<svg style="left:1502px;top:961px" width="8" height="4" viewBox="0 0 8 4"><rect x="0" y="0" width="8" height="3" fill="#8d919b"/></svg>
<div class="a" style="left:1516px;top:153px;width:326px;height:811px;background:#f5f6f9"></div>
<div class="a" style="left:1841px;top:153px;width:1px;height:811px;background:#e3e4e8"></div>
<div class="a" style="left:1842px;top:153px;width:30px;height:811px;background:#f5f6f9"></div>
<div class="a" style="left:1525px;top:164px;font-size:15.2px;line-height:20px;color:#333">稻壳智能特性</div>
<svg style="left:1619px;top:171px" width="5" height="3" viewBox="0 0 5 3"><path d="M0 0H5L2.5 3Z" fill="#555"/></svg>
<svg style="left:1759px;top:163px" width="20" height="20" viewBox="0 0 20 20"><g fill="none" stroke="#4a4f5c" stroke-width="1.4" stroke-linejoin="round"><path d="M8.2 1H11.8L12.4 3.6L14.6 4.8L17.1 4L18.9 7.1L17 9V11L18.9 12.9L17.1 16L14.6 15.2L12.4 16.4L11.8 19H8.2L7.6 16.4L5.4 15.2L2.9 16L1.1 12.9L3 11V9L1.1 7.1L2.9 4L5.4 4.8L7.6 3.6Z"/><circle cx="10" cy="10" r="3"/></g></svg>
<svg style="left:1788px;top:163px" width="18" height="19" viewBox="0 0 18 19"><g fill="none" stroke="#4a4f5c" stroke-width="1.4" stroke-linejoin="round"><path d="M5 1H13L12 3.5V7.5L16.5 12H1.5L6 7.5V3.5Z"/><path d="M9 12V18.5"/></g></svg>
<svg style="left:1819px;top:165px" width="13" height="14" viewBox="0 0 13 14"><path d="M0.5 0.5L12.5 13.5M12.5 0.5L0.5 13.5" stroke="#4a4f5c" stroke-width="1.4"/></svg>
<div class="a" style="left:1543px;top:203px;font-size:15px;line-height:20px;color:#333">图片处理</div>
<div class="a" style="left:1633px;top:203px;font-size:15px;line-height:20px;color:#4a86d4">缺失字体</div>
<div class="a" style="left:1725px;top:203px;font-size:15px;line-height:20px;color:#333">文字处理</div>
<svg style="left:1807px;top:206px" width="14" height="13" viewBox="0 0 14 13"><path d="M0 1H14M0 6.5H14M0 12H14" stroke="#4a4f5c" stroke-width="1.4"/></svg>
<div class="a" style="left:1530px;top:234px;width:296px;height:1px;background:#e2e4e8"></div>
<div class="a" style="left:1620px;top:231px;width:89px;height:2px;background:#4a86d4"></div>
<div class="a" style="left:1531px;top:247px;font-size:14.8px;line-height:20px;color:#4a86d4">关闭自动展示缺失字体列表</div>
<div class="a" style="left:1530px;top:276px;width:298px;height:175px;background:#fff;border-radius:3px"></div>
<div class="a" style="left:1541px;top:292px;font-size:15px;line-height:20px;color:#333;font-weight:bold">高亮显示缺失字体</div>
<div class="a" style="left:1786px;top:291px;width:32px;height:18px;background:#6b7389;border-radius:9px"></div>
<div class="a" style="left:1788px;top:293px;width:14px;height:14px;background:#fff;border-radius:7px"></div>
<div class="a" style="left:1541px;top:320px;font-size:14.8px;line-height:20px;color:#8a8d94">开启后，可快速找到缺失字体的文字段落</div>
<div class="a" style="left:1541px;top:350px;font-size:14.8px;line-height:20px;color:#8a8d94">以下是范例：</div>
<div class="a" style="left:1541px;top:382px;font-size:14.8px;line-height:20px;color:#333">稻壳会员专享1万+云字体</div>
<svg style="left:1657px;top:424px" width="13" height="8" viewBox="0 0 13 8"><path d="M0.8 7.2L6.5 1.5L12.2 7.2" fill="none" stroke="#555" stroke-width="1.4"/></svg>
<div class="a" style="left:1677px;top:419px;font-size:14.8px;line-height:20px;color:#555">收起</div>
<div class="a" style="left:1531px;top:471px;font-size:14.8px;line-height:20px;color:#333">文档所缺字体</div>
<div class="a" style="left:1530px;top:499px;width:302px;height:120px;background:#fff;border-radius:3px"></div>
<div class="a" style="left:1546px;top:516px;font-size:14.8px;line-height:20px;color:#333">方正小标宋简体</div>
<div class="a" style="left:1546px;top:546px;font-size:14.8px;line-height:20px;color:#8a8d94">将替换成下方字体</div>
<div class="a" style="left:1546px;top:576px;font-size:20px;line-height:26px;color:#222;font-weight:bold">方正粗黑宋简体</div>
<div class="a" style="left:1776px;top:578px;font-size:15px;line-height:20px;color:#4a86d4;text-decoration:underline">替换</div>
<div class="a" style="left:1531px;top:649px;width:297px;height:38px;background:#f5513d;border-radius:2px"></div>
<div class="a" style="left:1599px;top:657px;font-size:18px;line-height:24px;color:#fff">开通会员后下载 ( 1 )</div>
<svg style="left:1532px;top:697px" width="20" height="21" viewBox="0 0 20 21"><path d="M10 0.5L19 5.5V15.5L10 20.5L1 15.5V5.5Z" fill="#ef4b3c"/><path d="M7 15C5 12 6 9 8 8C8.5 10.5 8.5 13 7 15Z M8.5 15.5C9 12 11 10.5 14 10.5C13 13 11.5 15 8.5 15.5Z" fill="#fff"/></svg>
<div class="a" style="left:1556px;top:698px;font-size:14.8px;line-height:20px;color:#8a8d94">包含稻壳会员</div>
<!-- sogou toolbar -->
<div class="a" style="left:1669px;top:692px;width:210px;height:31px;background:#fff;border:1px solid #c9ccd2"></div>
<svg style="left:1639px;top:688px" width="38" height="36" viewBox="0 0 38 36"><defs><linearGradient id="sg" x1="0" y1="0" x2="0" y2="1"><stop offset="0" stop-color="#f26a2c"/><stop offset="1" stop-color="#e4521e"/></linearGradient></defs><g transform="rotate(-14 19 18)"><rect x="3.5" y="3" width="31" height="30" rx="5" fill="url(#sg)"/><text x="19" y="29" text-anchor="middle" font-family="Liberation Sans" font-weight="bold" font-size="29" fill="#fff" transform="skewX(-8) translate(3 0)">S</text></g></svg>
<div class="a" style="left:1681px;top:696px;font-size:19px;line-height:24px;color:#1f6fce;font-weight:bold;-webkit-text-stroke:0.6px #1f6fce">中</div>
<svg style="left:1711px;top:701px" width="16" height="16" viewBox="0 0 16 16"><circle cx="3" cy="3" r="2.2" fill="none" stroke="#2070d0" stroke-width="1.5"/><path d="M11.5 7.5Q13.5 7.5 13 10.5Q12.5 13 10 14.5" fill="none" stroke="#2070d0" stroke-width="2.2"/><circle cx="11.8" cy="8.5" r="1.9" fill="#2070d0"/></svg>
<svg style="left:1735px;top:697px" width="22" height="22" viewBox="0 0 22 22"><circle cx="11" cy="11" r="9.5" fill="none" stroke="#2070d0" stroke-width="2"/><circle cx="7.8" cy="8.5" r="1.4" fill="#2070d0"/><circle cx="14.2" cy="8.5" r="1.4" fill="#2070d0"/><path d="M6.5 12.5Q11 17.5 15.5 12.5" fill="none" stroke="#2070d0" stroke-width="1.8"/></svg>
<svg style="left:1765px;top:697px" width="16" height="23" viewBox="0 0 16 23"><rect x="4" y="0.5" width="8" height="14" rx="4" fill="#2070d0"/><path d="M1 10Q1 17.5 8 17.5Q15 17.5 15 10M8 17.5V22M4 22H12" fill="none" stroke="#2070d0" stroke-width="1.8"/></svg>
<svg style="left:1790px;top:700px" width="22" height="16" viewBox="0 0 22 16"><rect x="0.5" y="0.5" width="21" height="15" rx="2" fill="#2070d0"/><g fill="#fff"><rect x="3" y="3.5" width="2" height="2"/><rect x="6.5" y="3.5" width="2" height="2"/><rect x="10" y="3.5" width="2" height="2"/><rect x="13.5" y="3.5" width="2" height="2"/><rect x="17" y="3.5" width="2" height="2"/><rect x="3" y="7" width="2" height="2"/><rect x="6.5" y="7" width="2" height="2"/><rect x="10" y="7" width="2" height="2"/><rect x="13.5" y="7" width="2" height="2"/><rect x="17" y="7" width="2" height="2"/><rect x="5" y="10.5" width="12" height="2"/></g></svg>
<svg style="left:1819px;top:697px" width="22" height="23" viewBox="0 0 22 23"><circle cx="9" cy="6" r="4.5" fill="#b9bcc4"/><path d="M1 21Q1 12 9 12Q15 12 16 17V21Z" fill="#b9bcc4"/><rect x="10" y="14" width="11" height="8" fill="#fff"/><text x="10.5" y="21.5" font-family="Liberation Sans" font-size="8" fill="#b9bcc4">21</text></svg>
<svg style="left:1845px;top:699px" width="21" height="19" viewBox="0 0 21 19"><path d="M6.5 0.5L1 3.5L0.5 8.5L4 9V18.5H17V9L20.5 8.5L20 3.5L14.5 0.5Q10.5 4 6.5 0.5Z" fill="#2070d0"/></svg>
<div class="a" style="left:1608px;top:734px;font-size:14.8px;line-height:20px;color:#4a86d4">查看更多办公字体</div>
<svg style="left:1735px;top:737px" width="7" height="12" viewBox="0 0 7 12"><path d="M1 1L6 6L1 11" fill="none" stroke="#4a86d4" stroke-width="1.4"/></svg>
<!-- right icon bar -->
<svg style="left:1855px;top:165px" width="17" height="6" viewBox="0 0 17 6"><path d="M0 1H17M0 5H17" stroke="#c4c7ce" stroke-width="1"/></svg>
<svg style="left:1856px;top:200px" width="16" height="20" viewBox="0 0 16 20"><g fill="none" stroke="#4a4f5c" stroke-width="1.4" stroke-linejoin="round"><path d="M1 18.5L2.5 13L14 1.5L18 5.5L6.5 17Z"/><path d="M0.5 18.8H16"/></g></svg>
<svg style="left:1859px;top:242px" width="14" height="22" viewBox="0 0 14 22"><path d="M1 1L15 13L9 13.5L12 20L9.5 21L7 15L1 19Z" fill="none" stroke="#4a4f5c" stroke-width="1.4" stroke-linejoin="round"/></svg>
<svg style="left:1856px;top:290px" width="16" height="19" viewBox="0 0 16 19"><g fill="none" stroke="#4a4f5c" stroke-width="1.4"><circle cx="3.5" cy="3.5" r="2.7"/><path d="M6.2 3.5H16M0 15H9"/><circle cx="11.5" cy="15" r="2.7"/><path d="M14.2 15H16"/></g></svg>
<svg style="left:1856px;top:335px" width="18" height="22" viewBox="0 0 18 22"><circle cx="11" cy="11" r="9.8" fill="none" stroke="#4a4f5c" stroke-width="1.4"/><path d="M8 8Q8 5 11 5Q14 5 14 8Q14 10 11 11.5V13.5" fill="none" stroke="#4a4f5c" stroke-width="1.4"/><circle cx="11" cy="16.5" r="1" fill="#4a4f5c"/></svg>
<svg style="left:1856px;top:380px" width="16" height="21" viewBox="0 0 16 21"><g fill="none" stroke="#4a4f5c" stroke-width="1.4"><path d="M1 6L3 1H16M1 6Q1 9 4 9Q7 9 7 6Q7 9 10 9M1 6V20H9"/><circle cx="14" cy="15" r="4"/></g></svg>
<div class="a" style="left:1849px;top:412px;width:23px;height:41px;background:#dcdee3"></div>
<svg style="left:1857px;top:422px" width="16" height="21" viewBox="0 0 16 21"><g fill="none" stroke="#4a4f5c" stroke-width="1.4" stroke-linejoin="round"><path d="M10 1Q1 1 1 9.5Q1 13 3.5 15V20H12"/><path d="M11 5L8 11H12L9 17"/></g></svg>
<div class="a" style="left:1844px;top:927px;width:28px;height:1px;background:#e2e4e8"></div>
<svg style="left:1856px;top:954px" width="16" height="8" viewBox="0 0 16 8"><circle cx="3.5" cy="4" r="2.5" fill="none" stroke="#4a4f5c" stroke-width="1.4"/><circle cx="11" cy="4" r="2.5" fill="none" stroke="#4a4f5c" stroke-width="1.4"/></svg>

<div id="page" style="position:absolute;left:0;top:0">
  <!-- corner marks -->
  <div class="a" style="left:419px;top:324px;width:1px;height:28px;background:#b5b5b5"></div>
  <div class="a" style="left:392px;top:351px;width:28px;height:1px;background:#b5b5b5"></div>
  <div class="a" style="left:1055px;top:324px;width:1px;height:28px;background:#b5b5b5"></div>
  <div class="a" style="left:1055px;top:351px;width:28px;height:1px;background:#b5b5b5"></div>

  <div class="H" style="left:450px;top:363px;font-size:23px;line-height:26px">3</div>
  <div class="H" style="left:486px;top:364px;font-size:21.6px;line-height:26px;letter-spacing:1.4px">系统的分析与设计</div>
  <div class="H" style="left:450px;top:409px;font-size:21.5px;line-height:26px">3.1</div>
  <div class="H" style="left:500px;top:410px;font-size:20px;line-height:26px;letter-spacing:1.5px">系统可行性分析</div>

  <div class="L" id="l1" style="left:452px;top:453px;letter-spacing:1.297px">不管是大型企业的运营产品，还是小公司的某个开发项目，在开发与实现之</div>
  <div class="L" id="l2" style="left:421px;top:489px;letter-spacing:1.330px">前的可行性分析都是很关键的，下面进行可行性分析。</div>
  <div class="H" style="left:451px;top:526px;font-size:18.7px;line-height:24px">3.1.1</div>
  <div class="H" style="left:507px;top:526px;font-size:17.3px;line-height:24px;letter-spacing:1.7px">经济可行性分析</div>
  <div class="L" id="l3" style="left:452px;top:561px;letter-spacing:1.297px">由于本人学知尚浅，系统开发的功能比较简单，维护起来也较为容易，在人</div>
  <div class="L" id="l4" style="left:421px;top:597px;letter-spacing:1.462px">力成本消耗方面花费是比较少的。基于 <span class="E">Spring Boot</span> 的电脑商城网站系统的设计</div>
  <div class="L" id="l5" style="left:421px;top:633px;letter-spacing:1.382px">与实现主要成本在于网站的开发，商家入驻的广告宣传，打响口号的宣传等等。</div>
  <div class="L" id="l6" style="left:421px;top:669px;letter-spacing:1.132px">初期产品的运营肯定是亏本的，但随着使用我们网站的人数的增多，广告商也会</div>
  <div class="L" id="l7" style="left:421px;top:705px;letter-spacing:1.462px">投入大量资金用于在我们平台的宣传，因此，本基于 <span class="E">Spring Boot</span> 的电脑商城网</div>
  <div class="L" id="l8" style="left:421px;top:740px;letter-spacing:1.330px">站系统的设计与实现的可行性的非常大的。</div>
  <div class="H" style="left:451px;top:777px;font-size:18.7px;line-height:24px">3.1.2</div>
  <div class="H" style="left:507px;top:777px;font-size:17.3px;line-height:24px;letter-spacing:1.7px">技术可行性分析</div>
  <div class="L" id="l9" style="left:452px;top:812px;letter-spacing:1.783px">目前 <span class="E">J2EE</span> 技术非常成熟，结合 <span class="E">Spring Boot</span> 框架、<span class="E">MyBatis</span> 框架和 <span class="E">MySQL</span></div>
  <div class="L" id="l10" style="left:421px;top:848px;letter-spacing:1.330px">数据库，完全能够实现出一个电脑商城网站。</div>
  <div class="H" style="left:451px;top:885px;font-size:18.7px;line-height:24px">3.1.3</div>
  <div class="H" style="left:507px;top:885px;font-size:17.3px;line-height:24px;letter-spacing:1.7px">操作可行性分析</div>
  <div class="L" id="l11" style="left:452px;top:920px;letter-spacing:1.692px">本基于 <span class="E">Spring Boot</span> 的电脑商城网站系统的设计完全符合国际的开发原则，</div>
  <div class="L" id="l12" style="left:421px;top:956px;letter-spacing:1.132px">用户界面简洁大方友好，操作难度不难，技术也符合国际标准，在操作可行性上</div>
</div>
<div class="a" style="left:0;top:153px;width:1872px;height:4px;background:linear-gradient(rgba(0,0,0,0.06),rgba(0,0,0,0))"></div>
<svg style="left:865px;top:832px" width="70" height="3" viewBox="0 0 70 3"><path d="M0 2.5L2 0.5L4 2.5L6 0.5L8 2.5L10 0.5L12 2.5L14 0.5L16 2.5L18 0.5L20 2.5L22 0.5L24 2.5L26 0.5L28 2.5L30 0.5L32 2.5L34 0.5L36 2.5L38 0.5L40 2.5L42 0.5L44 2.5L46 0.5L48 2.5L50 0.5L52 2.5L54 0.5L56 2.5L58 0.5L60 2.5L62 0.5L64 2.5L66 0.5L68 2.5L70 0.5" fill="none" stroke="#d8383f" stroke-width="0.9"/></svg>
<svg style="left:617px;top:533px" width="8" height="15" viewBox="0 0 8 15"><path d="M1 0.5Q4 0.5 4 2.5V12.5Q4 14.5 7 14.5M7 0.5Q4 0.5 4 2.5M4 12.5Q4 14.5 1 14.5" fill="none" stroke="#222" stroke-width="1"/></svg>
</body></html>
